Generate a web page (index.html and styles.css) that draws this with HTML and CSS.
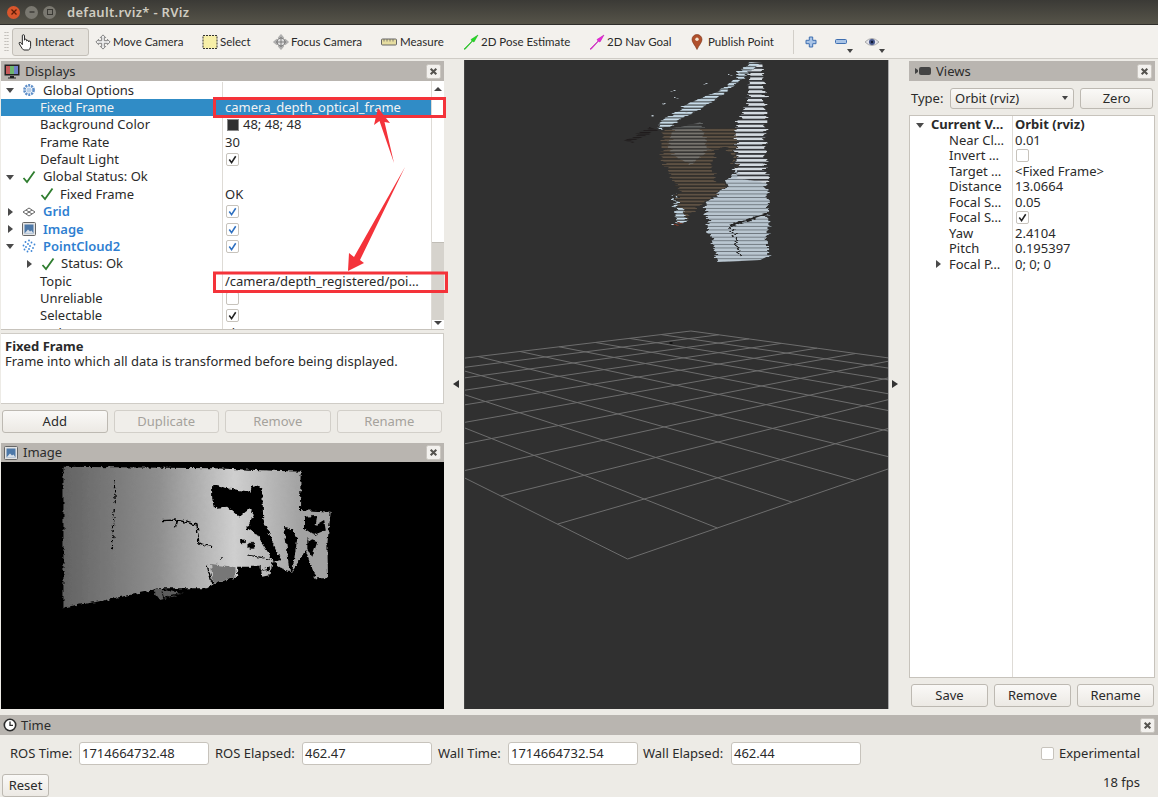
FILE: index.html
```html
<!DOCTYPE html>
<html lang="en">
<head>
<meta charset="utf-8">
<title>default.rviz* - RViz</title>
<link rel="stylesheet" href="styles.css">
</head>
<body>
<svg class="defs" width="0" height="0" aria-hidden="true">
  <defs>
    <symbol id="check" viewBox="0 0 14 14"><path d="M1.5 8 L5 12 L12.5 1.5" fill="none" stroke="#2f7d2f" stroke-width="1.8"/></symbol>
    <symbol id="tick" viewBox="0 0 12 12"><path d="M2.5 6 L5 9.5 L9.5 2.5" fill="none" stroke="currentColor" stroke-width="1.7"/></symbol>
    <symbol id="gear" viewBox="0 0 14 14"><circle cx="7" cy="7" r="4.6" fill="none" stroke="#5f8fc9" stroke-width="2.6" stroke-dasharray="2 .9"/><circle cx="7" cy="7" r="2.6" fill="#b9cfe8"/></symbol>
    <symbol id="imgicon" viewBox="0 0 14 14"><rect x=".5" y=".5" width="13" height="13" rx="1" fill="#e4e4e4" stroke="#666"/><rect x="2.5" y="2.5" width="9" height="9" fill="#4d78a8"/><path d="M2.5 11.5 L6 7.5 L8 9.5 L9.5 8.5 L11.5 11.5Z" fill="#d8dfe8"/></symbol>
    <symbol id="close" viewBox="0 0 16 16"><rect x=".5" y=".5" width="15" height="15" rx="2" fill="#f3f1ee" stroke="#c9c5bf"/><path d="M5 5 L11 11 M11 5 L5 11" stroke="#55534f" stroke-width="2.2"/></symbol>
    <pattern id="s-white" width="6" height="4.3" patternUnits="userSpaceOnUse"><rect width="6" height="2.6" fill="#d3dae0"/><rect y="2.6" width="6" height="1.7" fill="#34363a"/></pattern>
    <pattern id="s-low" width="6" height="3.6" patternUnits="userSpaceOnUse"><rect width="6" height="2.7" fill="#b9c6d0"/><rect y="2.7" width="6" height=".9" fill="#6c757c"/></pattern>
    <pattern id="s-mid" width="6" height="3.4" patternUnits="userSpaceOnUse"><rect width="6" height="2" fill="#8b8f90"/><rect y="2" width="6" height="1.4" fill="#3a3b3b"/></pattern>
    <pattern id="s-brown" width="6" height="3.4" patternUnits="userSpaceOnUse"><rect width="6" height="1.8" fill="#5f5244"/><rect y="1.8" width="6" height="1.6" fill="#33302c"/></pattern>
    <pattern id="s-beam" width="5" height="3.2" patternUnits="userSpaceOnUse"><rect width="5" height="2.2" fill="#c7dbe8"/><rect y="2.2" width="5" height="1" fill="#3f4447"/></pattern>
    <pattern id="s-dark" width="5" height="2.4" patternUnits="userSpaceOnUse"><rect width="5" height="1.4" fill="#1f1b1c"/></pattern>
    <linearGradient id="depth" gradientUnits="userSpaceOnUse" x1="70" y1="0" x2="780" y2="0">
      <stop offset="0" stop-color="#636363"/><stop offset=".4" stop-color="#8e8e8e"/><stop offset=".72" stop-color="#cfcfcf"/><stop offset="1" stop-color="#a2a2a2"/>
    </linearGradient>
    <filter id="rough" x="-5%" y="-5%" width="110%" height="110%" color-interpolation-filters="sRGB">
      <feTurbulence type="fractalNoise" baseFrequency=".02 .45" numOctaves="2" seed="4"/>
      <feColorMatrix values="1 0 0 0 0  0 0 0 0 .5  0 0 1 0 0  0 0 0 0 1"/>
      <feDisplacementMap in="SourceGraphic" scale="14" xChannelSelector="R" yChannelSelector="G"/>
      <feGaussianBlur stdDeviation=".3"/>
    </filter>
    <filter id="rough-depth" x="-5%" y="-5%" width="110%" height="110%">
      <feTurbulence type="fractalNoise" baseFrequency=".08" numOctaves="3" seed="7"/>
      <feDisplacementMap in="SourceGraphic" scale="14" xChannelSelector="R" yChannelSelector="G"/>
      <feGaussianBlur stdDeviation="1"/>
    </filter>
  </defs>
</svg>

<div class="app">
  <header class="titlebar">
    <span class="wbtn wbtn-close"><svg viewBox="0 0 8 8"><path d="M1.5 1.5 L6.5 6.5 M6.5 1.5 L1.5 6.5" stroke="#5b1d08" stroke-width="1.3"/></svg></span>
    <span class="wbtn wbtn-min"><svg viewBox="0 0 8 8"><path d="M1.5 4 H6.5" stroke="#3a3934" stroke-width="1.4"/></svg></span>
    <span class="wbtn wbtn-max"><svg viewBox="0 0 8 8"><rect x="1.5" y="1.5" width="5" height="5" fill="none" stroke="#3a3934"/></svg></span>
    <span class="wtitle">default.rviz* - RViz</span>
  </header>

  <nav class="toolbar">
    <span class="grip"></span>
    <div class="tool tool-interact">
      <svg class="ticon" viewBox="0 0 18 20"><path d="M6 10 V3 a1.2 1.2 0 0 1 2.4 0 V8 a1.2 1.2 0 0 1 2.4 0 V9 a1.2 1.2 0 0 1 2.3 0 V10 a1.1 1.1 0 0 1 2.2 0 V15 q0 3 -2.5 4 H7.5 Q6 18 4 14.5 L2.5 12 q-.6 -1.6 1 -1.6 Q5 11 6 13Z" fill="#fff" stroke="#222" stroke-width="1.1"/></svg>
      <span>Interact</span>
    </div>
    <div class="tool tool-move">
      <svg class="ticon" viewBox="0 0 18 18"><path d="M9 1 L12 4 H10.5 V7.5 H14 V6 L17 9 L14 12 V10.5 H10.5 V14 H12 L9 17 L6 14 H7.5 V10.5 H4 V12 L1 9 L4 6 V7.5 H7.5 V4 H6Z" fill="#eee" stroke="#777" stroke-width="1"/></svg>
      <span>Move Camera</span>
    </div>
    <div class="tool tool-select">
      <svg class="ticon" viewBox="0 0 16 16"><rect x="1" y="1.5" width="14" height="13" fill="#f7efa8" stroke="#333" stroke-dasharray="2 1"/></svg>
      <span>Select</span>
    </div>
    <div class="tool tool-focus">
      <svg class="ticon" viewBox="0 0 18 18"><path d="M9 0.5 L12 4 H6Z M9 17.500 L12 14 H6Z M.5 9 L4 6 V12Z M17.500 9 L14 6 V12Z" fill="#bbb" stroke="#888" stroke-width=".6"/><circle cx="9" cy="9" r="4.5" fill="#ddd" stroke="#777"/><path d="M9 3 V15 M3 9 H15" stroke="#777"/></svg>
      <span>Focus Camera</span>
    </div>
    <div class="tool tool-measure">
      <svg class="ticon" viewBox="0 0 16 8"><rect x=".5" y="1" width="15" height="6" rx="1" fill="#e6dda0" stroke="#666"/><path d="M3 1 V3.5 M6 1 V3.5 M9 1 V3.5 M12 1 V3.5" stroke="#666" stroke-width=".8"/></svg>
      <span>Measure</span>
    </div>
    <div class="tool tool-pose">
      <svg class="ticon" viewBox="0 0 16 16"><path d="M1 15 L9 7 L8 5.5 L15 1 L11 8 L9.5 7.3 L2 15.4Z" fill="#22dd22" stroke="#19a819" stroke-width=".5"/></svg>
      <span>2D Pose Estimate</span>
    </div>
    <div class="tool tool-nav">
      <svg class="ticon" viewBox="0 0 16 16"><path d="M1 15 L9 7 L8 5.5 L15 1 L11 8 L9.5 7.3 L2 15.4Z" fill="#ee22dd" stroke="#b516a8" stroke-width=".5"/></svg>
      <span>2D Nav Goal</span>
    </div>
    <div class="tool tool-point">
      <svg class="ticon" viewBox="0 0 12 16"><path d="M6 15.500 C4 11 1 8.500 1 5.500 a5 5 0 0 1 10 0 C11 8.500 8 11 6 15.500Z" fill="#b0502c" stroke="#7a3418" stroke-width=".6"/><circle cx="6" cy="5.300" r="1.700" fill="#f3e3d0"/></svg>
      <span>Publish Point</span>
    </div>
    <span class="tsep"></span>
    <svg class="tplus" viewBox="0 0 12 12"><path d="M4.3 1 H7.7 V4.3 H11 V7.7 H7.7 V11 H4.3 V7.7 H1 V4.3 H4.3Z" fill="#a9c4e6" stroke="#3f6fb0"/></svg>
    <span class="tdrop"><svg class="tminus" viewBox="0 0 12 5"><rect x=".5" y=".5" width="11" height="4" rx="1" fill="#a9c4e6" stroke="#3f6fb0"/></svg><i class="drop"></i></span>
    <span class="tdrop tdrop-eye"><svg class="teye" viewBox="0 0 16 10"><path d="M1 5 Q8 -2 15 5 Q8 12 1 5Z" fill="#e3e3ea" stroke="#aaa"/><circle cx="8" cy="5" r="3" fill="#44558a"/><circle cx="8" cy="5" r="1.200" fill="#111a33"/></svg><i class="drop"></i></span>
  </nav>

  <main class="workspace">
    <section class="leftcol">
      <div class="dock-title">
        <svg class="dock-icon" viewBox="0 0 16 15"><rect x=".5" y=".5" width="15" height="11" fill="#222"/><rect x="2" y="2" width="4" height="8" fill="#c85a5a"/><rect x="6" y="2" width="4" height="8" fill="#6fb56f"/><rect x="10" y="2" width="4" height="8" fill="#6f7fc8"/><path d="M6 12 H10 V13.5 H12 V14.5 H4 V13.5 H6Z" fill="#222"/></svg>
        <span class="dock-name">Displays</span>
        <svg class="dock-close"><use href="#close"/></svg>
      </div>
      <div class="tree-wrap">
        <div class="tree">
          <div class="row"><div class="name top"><i class="arr open"></i><svg class="ic"><use href="#gear"/></svg><span>Global Options</span></div><div class="val"></div></div>
          <div class="row sel"><div class="name l1"><span>Fixed Frame</span></div><div class="val">camera_depth_optical_frame</div></div>
          <div class="row"><div class="name l1"><span>Background Color</span></div><div class="val"><i class="swatch"></i>48; 48; 48</div></div>
          <div class="row"><div class="name l1"><span>Frame Rate</span></div><div class="val">30</div></div>
          <div class="row"><div class="name l1"><span>Default Light</span></div><div class="val"><span class="cb"><svg><use href="#tick"/></svg></span></div></div>
          <div class="row"><div class="name top"><i class="arr open"></i><svg class="ic"><use href="#check"/></svg><span>Global Status: Ok</span></div><div class="val"></div></div>
          <div class="row"><div class="name l1"><svg class="ic ic-l"><use href="#check"/></svg><span>Fixed Frame</span></div><div class="val">OK</div></div>
          <div class="row"><div class="name top"><i class="arr shut"></i><svg class="ic" viewBox="0 0 14 10"><path d="M7 1 L13 5 L7 9 L1 5Z M4 3 L10 7 M10 3 L4 7" fill="none" stroke="#666"/></svg><span class="blue">Grid</span></div><div class="val"><span class="cb cb-blue"><svg><use href="#tick"/></svg></span></div></div>
          <div class="row"><div class="name top"><i class="arr shut"></i><svg class="ic"><use href="#imgicon"/></svg><span class="blue">Image</span></div><div class="val"><span class="cb cb-blue"><svg><use href="#tick"/></svg></span></div></div>
          <div class="row"><div class="name top"><i class="arr open"></i><svg class="ic" viewBox="0 0 14 14"><g fill="#3f86d6"><circle cx="7" cy="1.5" r=".9"/><circle cx="3.5" cy="3" r=".9"/><circle cx="9.5" cy="3.5" r=".9"/><circle cx="6" cy="5" r=".9"/><circle cx="1.5" cy="6.5" r=".9"/><circle cx="12.5" cy="5.5" r=".9"/><circle cx="8" cy="7" r=".9"/><circle cx="4" cy="8" r=".9"/><circle cx="11" cy="9" r=".9"/><circle cx="2.5" cy="10.5" r=".9"/><circle cx="7" cy="10" r=".9"/><circle cx="5.5" cy="12.5" r=".9"/><circle cx="9.5" cy="12" r=".9"/></g></svg><span class="blue">PointCloud2</span></div><div class="val"><span class="cb cb-blue"><svg><use href="#tick"/></svg></span></div></div>
          <div class="row"><div class="name l-status"><i class="arr shut"></i><svg class="ic ic-l"><use href="#check"/></svg><span>Status: Ok</span></div><div class="val"></div></div>
          <div class="row"><div class="name l1"><span>Topic</span></div><div class="val">/camera/depth_registered/poi…</div></div>
          <div class="row"><div class="name l1"><span>Unreliable</span></div><div class="val"><span class="cb"></span></div></div>
          <div class="row"><div class="name l1"><span>Selectable</span></div><div class="val"><span class="cb"><svg><use href="#tick"/></svg></span></div></div>
          <div class="row"><div class="name l1"><span>Style</span></div><div class="val">Flat Squares</div></div>
        </div>
        <div class="scrollbar">
          <i class="sb-up"></i>
          <div class="sb-thumb"></div>
          <i class="sb-down"></i>
        </div>
      </div>
      <div class="help">
        <strong>Fixed Frame</strong>
        <p>Frame into which all data is transformed before being displayed.</p>
      </div>
      <div class="btnrow">
        <button class="btn">Add</button>
        <button class="btn off">Duplicate</button>
        <button class="btn off">Remove</button>
        <button class="btn off">Rename</button>
      </div>
      <div class="dock-title dock-image">
        <svg class="dock-icon dock-icon-sm"><use href="#imgicon"/></svg>
        <span class="dock-name">Image</span>
        <svg class="dock-close"><use href="#close"/></svg>
      </div>
      <svg class="depth" viewBox="0 0 442 247" preserveAspectRatio="none">
        <g transform="translate(39 -2) scale(.3333)" filter="url(#rough-depth)">
          <path d="M70 20 L520 25 L780 35 L778 150 L870 155 L860 250 L862 355 L825 355 L795 270 L755 335 L740 335 L695 305 L690 345 L665 350 L660 320 L590 320 L590 350 L520 372 L500 385 L350 385 L330 392 L170 425 L70 442Z" fill="url(#depth)"/>
          <path d="M515 75 L560 85 L630 95 L635 75 L665 85 L668 180 L720 300 L700 305 L650 225 L620 205 L640 165 L625 145 L595 170 L560 140 L520 145 L515 110Z" fill="#000"/>
          <path d="M730 200 L750 205 L770 235 L755 335 L745 330 L740 270Z" fill="#000"/>
          <path d="M790 170 L830 168 L825 195 L850 180 L855 210 L820 225 L790 205Z M800 235 L830 245 L815 290 L800 270Z" fill="#000"/>
          <path d="M365 182 L410 180 L405 205 L412 180 L470 195 L475 250 L515 260" fill="none" stroke="#000" stroke-width="4"/>
          <path d="M222 60 L225 130 M222 150 L216 268" fill="none" stroke="#000" stroke-width="4" stroke-dasharray="10 5"/>
          <path d="M512 312 L585 322 L585 352 L518 372Z" fill="#777"/>
          <path d="M500 315 L515 372" stroke="#000" stroke-width="4"/>
          <path d="M340 395 L360 420 L430 400 L365 390 L350 385Z" fill="#5b5b5b"/>
          <path d="M365 395 L370 412 L430 398" fill="none" stroke="#000" stroke-width="3"/>
          <path d="M600 240 h15 v8 h-15Z M625 250 h15 v15 h-15Z M620 285 L690 298 L650 290Z M662 330 h25 v-8 M540 290 v10" fill="#000" stroke="#000" stroke-width="2"/>
        </g>
      </svg>
    </section>

    <div class="collapse-handle handle-left"><i class="tri-left"></i></div>

    <section class="view3d-wrap">
      <svg class="view3d" viewBox="464 60 424 649" preserveAspectRatio="none">
        <g stroke="#6d6d6d" stroke-width="1" fill="none">
          <path d="M627 559 L269 381.4 M717 528 L328 374.3 M791.8 502.2 L381.8 367.9 M855 480.4 L431.3 362 M909 461.7 L477 356.5 M955.9 445.6 L519.2 351.5 M996.8 431.5 L558.4 346.8 M1032.8 419 L594.9 342.5 M1064.8 408 L628.9 338.4 M1093.4 398.2 L660.6 334.6 M1119.2 389.3 L690.4 331"/>
          <path d="M627 559 L1119.2 389.3 M556.7 524.1 L1054.6 380.5 M500 496 L996.9 372.7 M453.3 472.8 L945 365.6 M414.2 453.4 L898.2 359.3 M381 436.9 L855.6 353.5 M352.3 422.7 L816.8 348.2 M327.4 410.3 L781.2 343.4 M305.6 399.5 L748.5 338.9 M286.3 389.9 L718.3 334.8 M269 381.4 L690.4 331"/>
        </g>
        <g filter="url(#rough)">
          <path d="M662 130 L735 128 L735 165 L722 190 L700 205 L688 215 L686 222 L679 222 L677 190 L670 175 L662 160Z" fill="url(#s-brown)"/>
          <ellipse cx="722" cy="165" rx="11" ry="18" fill="#303030"/>
          <path d="M672 128 L700 122 L708 150 L690 165 L668 150Z" fill="url(#s-mid)" opacity=".55"/>
          <path d="M705 203 L723 190 L737 167 L766 183 L768 257 L762 260 L717 262 L708 233Z" fill="url(#s-low)"/>
          <path d="M750 62 L762 63 L765 103 L765 160 L767 183 L737 178 L735 130 L747 103Z" fill="url(#s-white)"/>
          <path d="M749 62 L759 64 L716 100 L676 122 L660 130 L657 125 L690 102 L722 90Z" fill="url(#s-beam)"/>
          <path d="M673 193 L680 208 L687 221 L680 225 L676 225Z" fill="url(#s-beam)"/>
          <path d="M625 141 L650 127 L656 130 L630 143Z" fill="url(#s-dark)"/>
          <circle cx="680" cy="224" r="2" fill="#70382a"/>
          <path d="M730 226 L740 256 M730 226 L768 213" stroke="#242424" stroke-width="1.6" fill="none"/>
          <path d="M733 225 L755 218" stroke="#242424" stroke-width="3" stroke-dasharray="4 3" fill="none"/>
          <g fill="#b7c2ca">
            <rect x="672" y="90" width="2" height="1.5"/><rect x="703" y="83" width="2" height="1.5"/><rect x="728" y="74" width="2" height="1.5"/><rect x="673" y="97" width="2" height="1.5"/><rect x="686" y="112" width="2" height="1.5"/><rect x="662" y="103" width="2" height="1.5"/><rect x="650" y="115" width="2" height="1.5"/><rect x="738" y="72" width="2" height="1.5"/><rect x="716" y="93" width="2" height="1.5"/>
          </g>
        </g>
        <rect x="669" y="342" width="3" height="2" fill="#111"/>
      </svg>
    </section>

    <div class="collapse-handle handle-right"><i class="tri-right"></i></div>

    <aside class="rightcol">
      <div class="dock-title">
        <svg class="dock-icon dock-icon-cam" viewBox="0 0 16 10"><path d="M0 2 L3 4 V6 L0 8Z" fill="#444"/><rect x="4" y="1" width="12" height="8" rx="2" fill="#444"/></svg>
        <span class="dock-name">Views</span>
        <svg class="dock-close"><use href="#close"/></svg>
      </div>
      <div class="type-row">
        <span class="type-label">Type:</span>
        <div class="combo"><span>Orbit (rviz)</span><i class="drop"></i></div>
        <button class="btn btn-zero">Zero</button>
      </div>
      <div class="vtree">
        <div class="vrow"><div class="vname vbold"><i class="arr open"></i><span>Current V…</span></div><div class="vval vbold">Orbit (rviz)</div></div>
        <div class="vrow"><div class="vname"><span>Near Cl…</span></div><div class="vval">0.01</div></div>
        <div class="vrow"><div class="vname"><span>Invert …</span></div><div class="vval"><span class="cb"></span></div></div>
        <div class="vrow"><div class="vname"><span>Target …</span></div><div class="vval">&lt;Fixed Frame&gt;</div></div>
        <div class="vrow"><div class="vname"><span>Distance</span></div><div class="vval">13.0664</div></div>
        <div class="vrow"><div class="vname"><span>Focal S…</span></div><div class="vval">0.05</div></div>
        <div class="vrow"><div class="vname"><span>Focal S…</span></div><div class="vval"><span class="cb"><svg><use href="#tick"/></svg></span></div></div>
        <div class="vrow"><div class="vname"><span>Yaw</span></div><div class="vval">2.4104</div></div>
        <div class="vrow"><div class="vname"><span>Pitch</span></div><div class="vval">0.195397</div></div>
        <div class="vrow"><div class="vname vname-arr"><i class="arr shut"></i><span>Focal P…</span></div><div class="vval">0; 0; 0</div></div>
      </div>
      <div class="btnrow btnrow-views">
        <button class="btn">Save</button>
        <button class="btn">Remove</button>
        <button class="btn">Rename</button>
      </div>
    </aside>
  </main>

  <section class="timepanel">
    <div class="dock-title dock-time">
      <svg class="dock-icon" viewBox="0 0 14 14"><circle cx="7" cy="7" r="5.7" fill="#fff" stroke="#2b2b2b" stroke-width="1.6"/><path d="M7 3.5 V7.3 H10" fill="none" stroke="#2b2b2b" stroke-width="1.3"/></svg>
      <span class="dock-name">Time</span>
      <svg class="dock-close"><use href="#close"/></svg>
    </div>
    <div class="time-fields">
      <label class="tlabel tl-1">ROS Time:</label><span class="tinput">1714664732.48</span>
      <label class="tlabel tl-2">ROS Elapsed:</label><span class="tinput">462.47</span>
      <label class="tlabel tl-3">Wall Time:</label><span class="tinput">1714664732.54</span>
      <label class="tlabel tl-4">Wall Elapsed:</label><span class="tinput">462.44</span>
      <span class="exp"><span class="cb"></span>Experimental</span>
    </div>
    <div class="time-foot">
      <button class="btn btn-reset">Reset</button>
      <span class="fps">18 fps</span>
    </div>
  </section>
</div>

<svg class="annot" viewBox="0 0 1158 797" aria-hidden="true">
  <rect x="214.500" y="98.500" width="230" height="18" fill="none" stroke="#f4333a" stroke-width="3"/>
  <rect x="214.500" y="273" width="232" height="18.500" fill="none" stroke="#f4333a" stroke-width="3"/>
  <path d="M378 108 L390 123 L384.500 122 L394 163 L379.500 121 L374 125Z" fill="#f4333a"/>
  <path d="M405 167 L360 260 L364 263 L348 271 L349 253 L354 257Z" fill="#f4333a"/>
</svg>
</body>
</html>
```
FILE: styles.css
```css
* { box-sizing: border-box; }
html, body { margin: 0; padding: 0; }
body {
  width: 1158px;
  height: 797px;
  overflow: hidden;
  position: relative;
  background: #edebe6;
  font: 13px/1 "Noto Sans", "Open Sans", sans-serif;
  color: #2a2a2a;
}
.defs { position: absolute; }
.app { display: flex; flex-direction: column; height: 797px; }

/* Title bar */
.titlebar {
  height: 25px;
  flex: none;
  display: flex;
  align-items: center;
  padding-left: 7px;
  background: linear-gradient(#3b3a36, #565449);
  border-bottom: 1px solid #2e2d2a;
}
.wbtn { width: 13px; height: 13px; border-radius: 50%; margin-right: 5px; display: flex; padding: 2.500px; }
.wbtn svg { width: 8px; height: 8px; }
.wbtn-close { background: #d9562c; }
.wbtn-min, .wbtn-max { background: #7a7870; }
.wtitle { margin-left: 6px; color: #cfccc0; font-weight: 600; letter-spacing: .3px; }

/* Toolbar */
.toolbar {
  height: 34px;
  flex: none;
  display: flex;
  align-items: center;
  padding-left: 4px;
  background: #f3f1ed;
  border-bottom: 1px solid #cfccc6;
  font-family: Lato, "Noto Sans", sans-serif;
  font-size: 11.500px;
}
.grip { width: 5px; height: 22px; margin-right: 3px; background: radial-gradient(circle, #bdbab4 .7px, transparent 1px) 0 0 / 2.500px 3px; }
.tool { display: flex; align-items: center; height: 28px; flex: none; }
.ticon { width: 16px; height: 16px; margin-right: 2px; flex: none; }
.tool-interact { width: 77px; margin-right: 6px; padding-left: 4px; background: #e5e2dc; border: 1px solid #c3bfb8; border-radius: 3px; }
.tool-interact .ticon { width: 16px; height: 20px; margin-right: 2px; }
.tool-move { width: 107px; }
.tool-select { width: 71px; }
.tool-focus { width: 108px; }
.tool-measure { width: 82px; }
.tool-pose { width: 126px; }
.tool-nav { width: 102px; }
.tool-point { width: 102px; }
.tool-point .ticon { width: 12px; margin-right: 5px; }
.tool-measure .ticon { height: 8px; margin-right: 3px; }
.tsep { width: 1px; height: 24px; background: #d2cfc9; margin-right: 11px; }
.tplus { width: 12px; height: 12px; margin-right: 18px; }
.tdrop { position: relative; display: flex; align-items: center; width: 29px; height: 24px; flex: none; }
.tminus { width: 12px; height: 5px; }
.teye { width: 16px; height: 10px; }
.drop { display: block; width: 0; height: 0; border: 3.500px solid transparent; border-top: 4px solid #444; border-bottom: 0; }
.tdrop .drop { position: absolute; left: 12px; top: 19px; }
.tdrop-eye .drop { left: 15px; }

/* Workspace */
.workspace {
  height: 656px;
  flex: none;
  display: flex;
  padding-top: 2px;
}
.leftcol { width: 444px; flex: none; padding-left: 1px; display: flex; flex-direction: column; }
.rightcol { width: 246px; flex: none; display: flex; flex-direction: column; }
.collapse-handle { width: 20px; flex: none; display: flex; align-items: center; justify-content: center; padding-bottom: 8px; }
.handle-left { padding-left: 4px; }
.handle-right { padding-right: 8px; }
.tri-left { border: 4px solid transparent; border-right: 6px solid #333; border-left: 0; }
.tri-right { border: 4px solid transparent; border-left: 6px solid #333; border-right: 0; }

.dock-title {
  height: 20px;
  flex: none;
  background: #b9b5b0;
  display: flex;
  align-items: center;
  padding: 0 3px 0 3px;
}
.dock-icon { width: 16px; height: 15px; margin-right: 5px; }
.dock-icon-sm { width: 14px; height: 14px; }
.dock-icon-cam { width: 16px; height: 10px; margin-left: 3px; margin-right: 5px; }
.dock-name { flex: 1; color: #2c2c2c; }
.dock-close { width: 15px; height: 15px; }

/* Displays tree */
.tree-wrap {
  height: 249px;
  flex: none;
  display: flex;
  background: #fff;
  border-bottom: 1px solid #c7c3bc;
}
.tree { width: 430px; overflow: hidden; flex: none; padding-top: .5px; }
.row { height: 17.360px; display: flex; align-items: center; white-space: nowrap; }
.row.sel { background: #308cc6; color: #f2f2f2; }
.name { width: 221px; flex: none; height: 100%; display: flex; align-items: center; }
.val { flex: 1; height: 100%; display: flex; align-items: center; padding-left: 2px; border-left: 1px solid #dedbd6; }
.row.sel .val { border-left-color: #308cc6; }
.top { padding-left: 1px; }
.l1 { padding-left: 39px; }
.l-status { padding-left: 20px; }
.arr { display: block; flex: none; width: 20px; position: relative; height: 10px; }
.arr::before { content: ""; position: absolute; }
.arr.open::before { left: 4px; top: 3px; border: 4.500px solid transparent; border-top: 5px solid #4a4a4a; border-bottom: 0; }
.arr.shut::before { left: 6px; top: 1px; border: 4px solid transparent; border-left: 5px solid #4a4a4a; border-right: 0; }
.ic { width: 14px; height: 14px; margin-right: 7px; flex: none; }
.ic-l { margin-right: 6px; }
.blue { color: #2f7fd1; font-weight: 600; }
.swatch { display: block; width: 12px; height: 12px; background: #303030; border: 1px solid #888; margin-right: 4px; margin-left: 2px; }
.cb {
  display: inline-flex;
  width: 13px;
  height: 13px;
  margin-left: 1px;
  background: #fff;
  border: 1px solid #c7c3bc;
  border-radius: 2px;
  color: #222;
  flex: none;
}
.cb svg { width: 11px; height: 11px; }
.cb-blue { color: #2f70c0; }

.scrollbar {
  width: 13px;
  flex: none;
  background: #ffffff;
  border-left: 1px solid #dedbd6;
  display: flex;
  flex-direction: column;
  align-items: center;
  justify-content: space-between;
  padding: 6px 0 4px;
  position: relative;
}
.sb-thumb { position: absolute; left: 0; right: 0; top: 161px; height: 78px; background: #d6d3cd; border-top: 1px solid #c0bdb6; }
.sb-up { border: 4px solid transparent; border-bottom: 4px solid #444; border-top: 0; }
.sb-down { border: 4px solid transparent; border-top: 4px solid #444; border-bottom: 0; position: relative; }

.help {
  height: 71px;
  flex: none;
  margin-top: 3px;
  padding: 5px 4px;
  background: #fff;
  border: 1px solid #cfccc6;
  border-left: 0;
}
.help strong { display: block; font-weight: 700; line-height: 15px; }
.help p { margin: 0; line-height: 15px; }

.btnrow { display: flex; gap: 6px; padding: 6px 2px 0 1px; flex: none; }
.btn {
  flex: 1;
  height: 23px;
  font: inherit;
  color: #2a2a2a;
  padding: 0;
  background: linear-gradient(#faf9f7, #ece9e4);
  border: 1px solid #bdb9b2;
  border-radius: 3px;
}
.btn.off { color: #a5a29c; border-color: #d2cfc9; background: #f0eeea; }
.dock-image { margin-top: 10px; height: 19px; }
.depth { display: block; width: 443px; height: 247px; background: #000; flex: none; }

/* 3D view */
.view3d-wrap { width: 425px; flex: none; height: 649px; margin-top: -1px; background: #303030; border-left: 1px solid #444; border-right: 1px solid #aaa; }
.view3d { display: block; width: 100%; height: 100%; }

/* Views */
.type-row { display: flex; align-items: center; height: 34px; padding: 0 2px 0 2px; flex: none; }
.type-label { width: 39px; flex: none; }
.combo {
  width: 125px;
  height: 21px;
  display: flex;
  align-items: center;
  justify-content: space-between;
  padding: 0 5px 0 4px;
  background: linear-gradient(#faf9f7, #ece9e4);
  border: 1px solid #bdb9b2;
  border-radius: 3px;
}
.btn-zero { flex: none; width: 73px; height: 21px; margin-left: 6px; }
.vtree { height: 563px; flex: none; background: #fff; border: 1px solid #c7c3bc; padding-top: 1px; background-image: linear-gradient(#dedbd6, #dedbd6); background-size: 1px 100%; background-position: 102px 0; background-repeat: no-repeat; }
.vrow { height: 15.500px; display: flex; align-items: center; white-space: nowrap; }
.vname { width: 103px; flex: none; padding-left: 39px; display: flex; align-items: center; }
.vname.vbold { padding-left: 2px; }
.vname.vbold .arr { width: 19px; }
.vname-arr { padding-left: 20px; }
.vname-arr .arr { width: 19px; }
.vbold { font-weight: 700; }
.vval { padding-left: 2px; flex: 1; display: flex; align-items: center; }
.btnrow-views { padding: 6px 1px 0 2px; }

/* Time */
.timepanel { flex: none; }
.dock-time { height: 20px; padding-left: 3px; }
.dock-time .dock-icon { width: 14px; height: 14px; margin-right: 4px; }
.time-fields { display: flex; align-items: center; height: 36px; position: relative; }
.tlabel { flex: none; }
.tl-1 { width: 69px; margin-left: 10px; }
.tl-2 { width: 87px; margin-left: 6px; }
.tl-3 { width: 70px; margin-left: 6px; }
.tl-4 { width: 88px; margin-left: 5px; }
.tinput { width: 130px; height: 23px; flex: none; background: #fff; border: 1px solid #c7c3bc; border-radius: 3px; display: flex; align-items: center; padding-left: 2px; }
.exp { margin-left: auto; margin-right: 18px; display: flex; align-items: center; gap: 5px; }
.time-foot { display: flex; align-items: center; justify-content: space-between; height: 24px; padding: 0 18px 0 2px; margin-top: 2px; }
.btn-reset { flex: none; width: 47px; height: 23px; }
.fps { color: #2a2a2a; margin-top: -6px; }

/* Red annotations drawn over the screenshot */
.annot { position: absolute; left: 0; top: 0; width: 1158px; height: 797px; pointer-events: none; }
```
